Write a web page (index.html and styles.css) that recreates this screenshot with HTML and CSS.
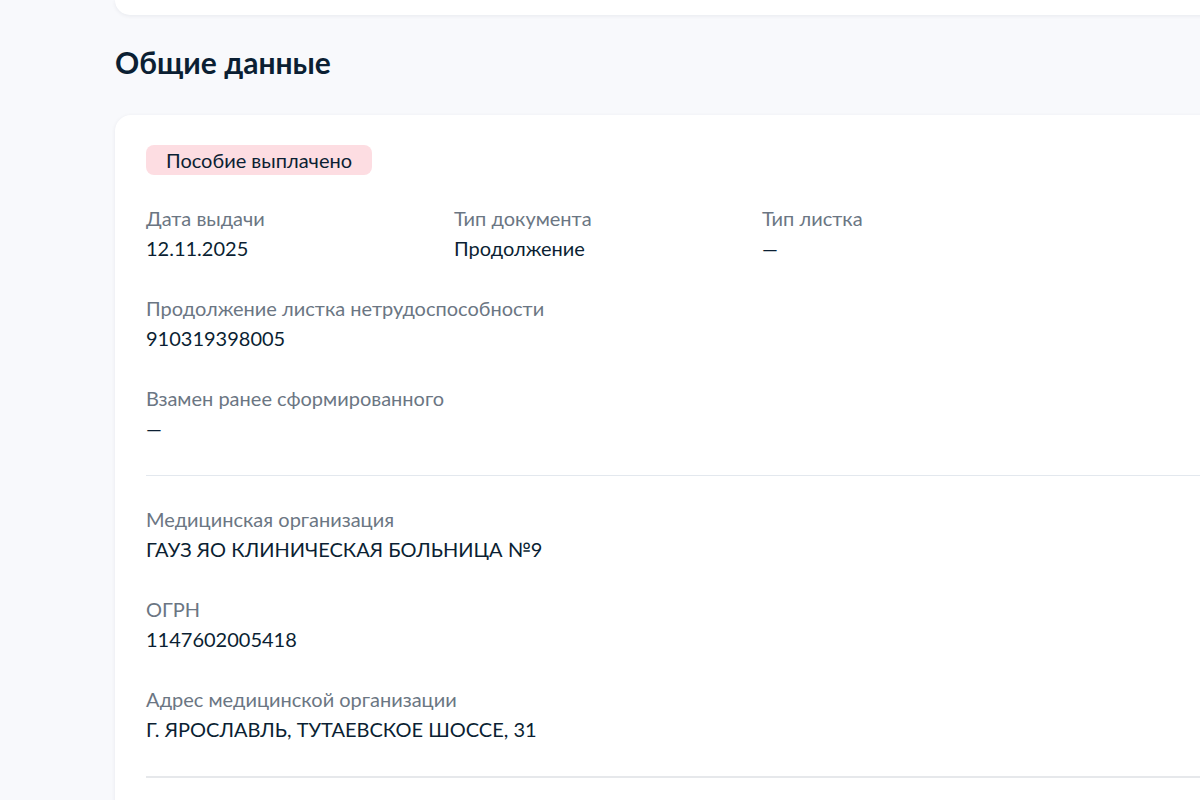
FILE: index.html
```html
<!DOCTYPE html>
<html lang="ru">
<head>
    <meta charset="UTF-8">
    <meta name="viewport" content="width=device-width, initial-scale=1.0">
    <title>Общие данные</title>
    <link rel="stylesheet" href="styles.css">
</head>
<body>
    <main class="page">
        <div class="top-card"></div>

        <h2 class="section-title">Общие данные</h2>

        <section class="card">
            <span class="badge">Пособие выплачено</span>

            <div class="fields">
                <div class="field">
                    <div class="label">Дата выдачи</div>
                    <div class="value">12.11.2025</div>
                </div>
                <div class="field">
                    <div class="label">Тип документа</div>
                    <div class="value">Продолжение</div>
                </div>
                <div class="field">
                    <div class="label">Тип листка</div>
                    <div class="value">—</div>
                </div>
                <div class="field wide">
                    <div class="label">Продолжение листка нетрудоспособности</div>
                    <div class="value">910319398005</div>
                </div>
                <div class="field wide">
                    <div class="label">Взамен ранее сформированного</div>
                    <div class="value">—</div>
                </div>
            </div>

            <hr class="divider">

            <div class="fields">
                <div class="field wide">
                    <div class="label">Медицинская организация</div>
                    <div class="value">ГАУЗ ЯО КЛИНИЧЕСКАЯ БОЛЬНИЦА №9</div>
                </div>
                <div class="field wide">
                    <div class="label">ОГРН</div>
                    <div class="value">1147602005418</div>
                </div>
                <div class="field wide">
                    <div class="label">Адрес медицинской организации</div>
                    <div class="value">Г. ЯРОСЛАВЛЬ, ТУТАЕВСКОЕ ШОССЕ, 31</div>
                </div>
            </div>

            <hr class="divider strong">
        </section>
    </main>
</body>
</html>
```

FILE: styles.css
```css
* {
    margin: 0;
    padding: 0;
    box-sizing: border-box;
}

body {
    background-color: #f8f9fc;
    font-family: Lato, "Noto Sans", sans-serif;
    color: #0b1f33;
    overflow: hidden;
}

.page {
    padding-left: 115px;
}

.top-card {
    height: 15px;
    background: #ffffff;
    border-radius: 0 0 16px 16px;
    margin-right: -40px;
    box-shadow: 0 1px 4px rgba(11, 31, 51, 0.07);
}

.section-title {
    margin-top: 29px;
    font-size: 30px;
    line-height: 36px;
    font-weight: 700;
    color: #0b1f33;
}

.card {
    margin-top: 35px;
    margin-right: -40px;
    background: #ffffff;
    border-radius: 16px;
    padding: 30px 0 40px 31px;
    box-shadow: 0 1px 4px rgba(11, 31, 51, 0.07);
}

.badge {
    display: inline-block;
    height: 30px;
    line-height: 30px;
    padding: 0 20px;
    border-radius: 8px;
    background: #fddde2;
    font-size: 20px;
    color: #0b1f33;
}

.fields {
    display: grid;
    grid-template-columns: repeat(3, 308px);
    row-gap: 30px;
}

.card > .fields:first-of-type {
    margin-top: 28px;
}

.field.wide {
    grid-column: 1 / -1;
}

.label {
    font-size: 20px;
    line-height: 30px;
    color: #6b7683;
}

.value {
    font-size: 20px;
    line-height: 30px;
    color: #0b1f33;
}

.divider {
    border: none;
    border-top: 1px solid #e3e8ee;
    margin: 32px 0 28px;
}

.divider.strong {
    border-top: 2px solid #e6e8eb;
    margin: 32px 0 0;
}
```
